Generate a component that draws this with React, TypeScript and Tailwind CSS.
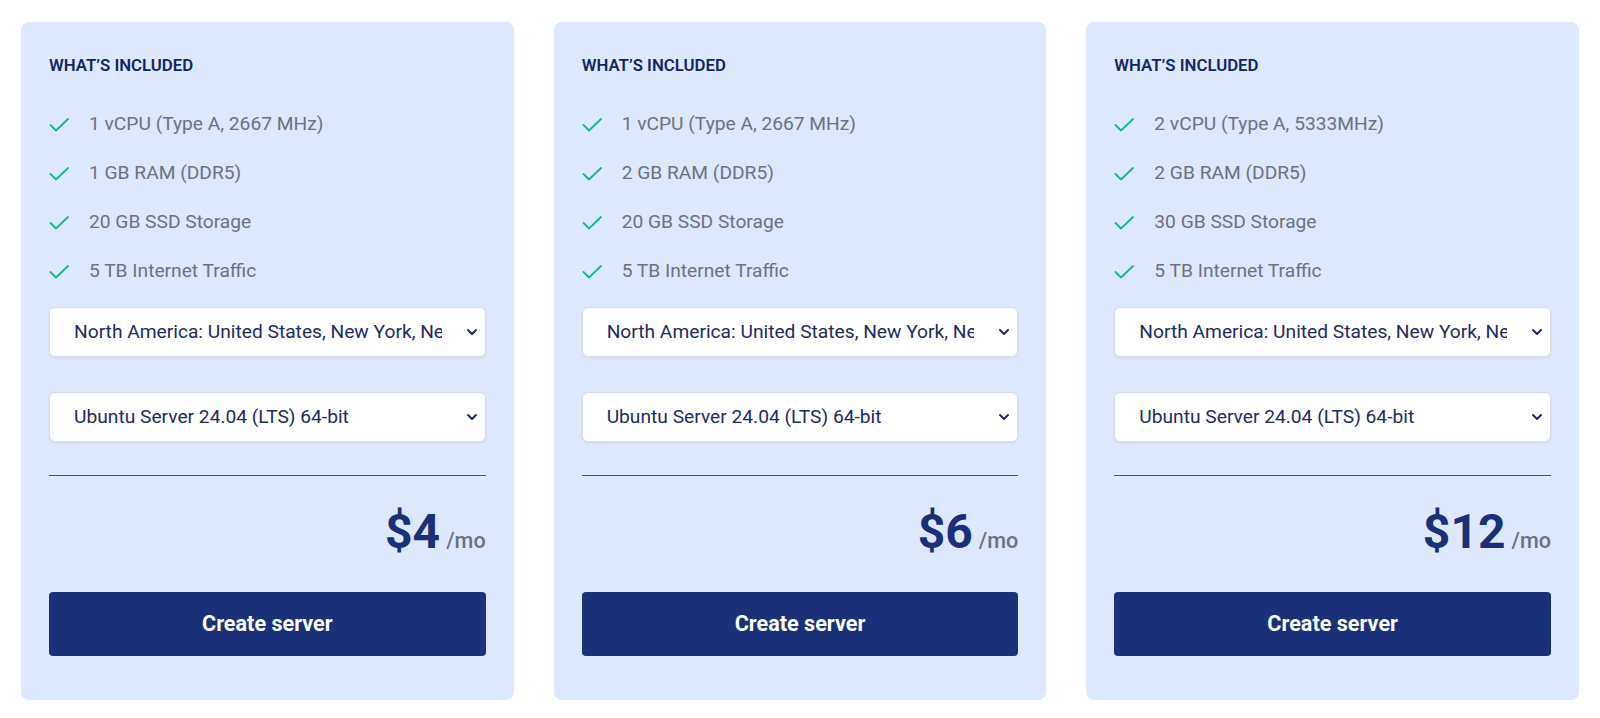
import React from 'react';

type Plan = {
    features: string[]
    price: string
}

const plans: Plan[] = [
    {
        features: ['1 vCPU (Type A, 2667 MHz)', '1 GB RAM (DDR5)', '20 GB SSD Storage', '5 TB Internet Traffic'],
        price: '$4',
    },
    {
        features: ['1 vCPU (Type A, 2667 MHz)', '2 GB RAM (DDR5)', '20 GB SSD Storage', '5 TB Internet Traffic'],
        price: '$6',
    },
    {
        features: ['2 vCPU (Type A, 5333MHz)', '2 GB RAM (DDR5)', '30 GB SSD Storage', '5 TB Internet Traffic'],
        price: '$12',
    },
]

const Check = () => (
    <svg width="20" height="20" viewBox="0 0 20 20" fill="none" stroke="#10b981" strokeWidth="1.8"
         strokeLinecap="round" strokeLinejoin="round" className="shrink-0">
        <path d="M1.5 11l5.5 5.5L19 5"/>
    </svg>
)

const Chevron = () => (
    <svg width="12" height="8" viewBox="0 0 12 8" fill="none" stroke="#1e2b5e" strokeWidth="2"
         strokeLinecap="round" strokeLinejoin="round">
        <path d="M2 2l4 4 4-4"/>
    </svg>
)

// looks like a native select, text gets cut before the arrow
const FakeSelect: React.FC<{ value: string }> = ({value}) => (
    <div className="h-[50px] bg-white rounded-md border border-[#d7dce6] shadow-[0_1px_2px_rgba(15,23,42,0.08)] flex items-center pl-6 pr-[7px]">
        <div className="flex-1 min-w-0 overflow-hidden whitespace-nowrap text-[19.2px] text-[#1e2b5e]">
            {value}
        </div>
        <span className="ml-[24px] flex shrink-0">
            <Chevron/>
        </span>
    </div>
)

const PlanCard: React.FC<{ plan: Plan }> = ({plan}) => (
    <div className="bg-[#dde8fd] rounded-lg px-7 pt-[33px] pb-[44px] flex flex-col">
        <p className="text-[16.8px] leading-5 font-semibold text-[#13275f]">WHAT’S INCLUDED</p>
        <ul className="mt-[35px] flex flex-col gap-[21px]">
            {plan.features.map((f) => (
                <li key={f} className="flex items-center gap-[20px] h-7">
                    <Check/>
                    <span className="text-[19.2px] leading-7 text-[#6b7280]">{f}</span>
                </li>
            ))}
        </ul>
        <div className="mt-[22px] flex flex-col gap-[35px]">
            <FakeSelect value="North America: United States, New York, New York"/>
            <FakeSelect value="Ubuntu Server 24.04 (LTS) 64-bit"/>
        </div>
        <div className="mt-[33px] border-t border-[#475569]"/>
        <div className="mt-[32px] flex items-baseline justify-end gap-[6px]">
            <span className="text-[48px] leading-none font-bold text-[#1a2f78]">{plan.price}</span>
            <span className="text-[21.6px] font-medium text-[#6b7280]">/mo</span>
        </div>
        <button className="mt-[35px] h-16 bg-[#1a3079] rounded text-white text-[21.6px] font-bold">
            Create server
        </button>
    </div>
)

export default function App() {
    return (
        <div className="min-h-screen bg-white px-[21px] pt-[22px] font-['Roboto',sans-serif]">
            <div className="grid grid-cols-3 gap-10">
                {plans.map((p) => (
                    <PlanCard key={p.price} plan={p}/>
                ))}
            </div>
        </div>
    );
}
